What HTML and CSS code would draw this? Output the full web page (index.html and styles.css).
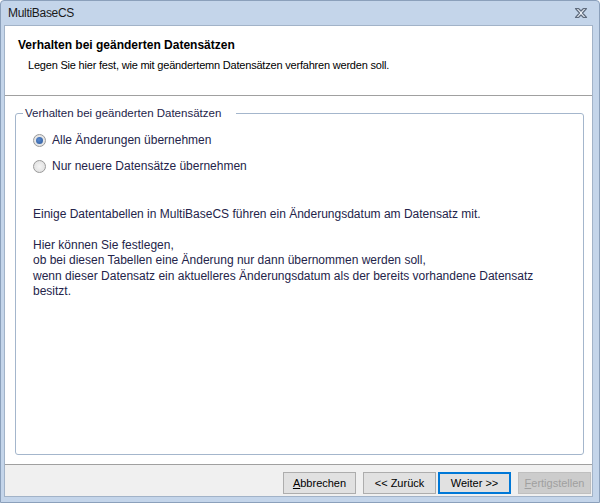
FILE: index.html
```html
<!DOCTYPE html>
<html>

<head>
    <title>MultiBaseCS</title>
    <meta charset="UTF-8">
    <link rel="stylesheet" href="styles.css">
</head>

<body>
    <div class="window">
        <div class="titlebar">
            <span class="title">MultiBaseCS</span>
            <svg class="close" width="14" height="12" viewBox="0 0 14 12">
                <path d="M1.5 1.5 L4.5 1.5 L7 4 L9.5 1.5 L12.5 1.5 L8.5 6 L12.5 10.5 L9.5 10.5 L7 8 L4.5 10.5 L1.5 10.5 L5.5 6 Z" fill="#eef2f8" stroke="#5f6c7e" stroke-width="1.2" stroke-linejoin="round" />
            </svg>
        </div>
        <div class="client">
            <div class="header">
                <h1>Verhalten bei geänderten Datensätzen</h1>
                <p>Legen Sie hier fest, wie mit geändertemn Datensätzen verfahren werden soll.</p>
            </div>
            <div class="content">
                <fieldset class="groupbox">
                    <legend>Verhalten bei geänderten Datensätzen</legend>
                    <div class="radiorow">
                        <span class="radio checked"></span><span>Alle Änderungen übernehmen</span>
                    </div>
                    <div class="radiorow">
                        <span class="radio"></span><span>Nur neuere Datensätze übernehmen</span>
                    </div>
                    <div class="info">
                        <p>Einige Datentabellen in MultiBaseCS führen ein Änderungsdatum am Datensatz mit.</p>
                        <p>Hier können Sie festlegen,<br>ob bei diesen Tabellen eine Änderung nur dann übernommen werden soll,<br>wenn dieser Datensatz ein aktuelleres Änderungsdatum als der bereits vorhandene Datensatz<br>besitzt.</p>
                    </div>
                </fieldset>
            </div>
            <div class="footer">
                <button class="btn"><u>A</u>bbrechen</button>
                <button class="btn">&lt;&lt; Zurück</button>
                <button class="btn focused">Weiter &gt;&gt;</button>
                <button class="btn disabled"><u>F</u>ertigstellen</button>
            </div>
        </div>
    </div>
</body>

</html>
```

FILE: styles.css
```css
* {
    box-sizing: border-box;
    margin: 0;
    padding: 0;
}

body {
    background: #ffffff;
    font-family: 'Liberation Sans', Arial, sans-serif;
}

.window {
    width: 600px;
    height: 503px;
    background: #c4d5ea;
    border: 1px solid #8ba0bb;
    border-radius: 4px 4px 0 0;
    padding: 0 6px 5px 3px;
    display: flex;
    flex-direction: column;
}

.titlebar {
    height: 24px;
    display: flex;
    align-items: center;
    justify-content: space-between;
    padding-left: 4px;
    padding-right: 5px;
}

.title {
    font-size: 12px;
    letter-spacing: -0.3px;
    color: #1a1a1a;
}

.client {
    flex: 1;
    background: #ffffff;
    border: 1px solid #a2b3c8;
    display: flex;
    flex-direction: column;
}

.header {
    height: 70px;
    border-bottom: 1px solid #a0a0a0;
    padding: 12px 0 0 13px;
}

.header h1 {
    font-size: 12px;
    font-weight: bold;
    color: #000000;
    line-height: 15px;
}

.header p {
    font-size: 11px;
    letter-spacing: -0.2px;
    color: #000000;
    line-height: 14px;
    margin-top: 5px;
    padding-left: 10px;
}

.content {
    flex: 1;
    padding: 10px 8px 9px 10px;
}

.groupbox {
    height: 100%;
    border: 1px solid #a4b6cc;
    border-radius: 3px;
    padding: 7px 0 0 17px;
    color: #24244a;
    font-size: 12px;
}

.groupbox legend {
    margin-left: -10px;
    padding: 0 15px 0 2px;
    font-size: 11.5px;
    line-height: 14px;
}

.radiorow {
    display: flex;
    align-items: center;
    height: 26px;
}

.radio {
    width: 13px;
    height: 13px;
    border-radius: 50%;
    border: 1px solid #9a9a9a;
    background: radial-gradient(circle, #f4f4f4 0%, #dcdcdc 100%);
    margin-right: 6px;
    position: relative;
}

.radio.checked::after {
    content: "";
    position: absolute;
    left: 2px;
    top: 2px;
    width: 7px;
    height: 7px;
    border-radius: 50%;
    background: radial-gradient(circle at 40% 40%, #5b8ad0 0%, #2a5898 100%);
}

.info {
    margin-top: 28px;
    line-height: 15.5px;
}

.info p {
    margin-bottom: 15px;
}

.footer {
    height: 32px;
    background: #f0f0f0;
    border-top: 1px solid #a0a0a0;
    display: flex;
    justify-content: flex-end;
    align-items: flex-start;
    padding: 7px 1px 0 0;
}

.btn {
    width: 73px;
    height: 22px;
    margin-left: 7px;
    background: #e1e1e1;
    border: 1px solid #adadad;
    font-family: 'Liberation Sans', Arial, sans-serif;
    font-size: 11px;
    color: #000000;
}

.btn.focused {
    margin-left: 2px;
    border: 2px solid #0078d7;
}

.btn.disabled {
    color: #a0a0a0;
    background: #cccccc;
    border-color: #bfbfbf;
}
```
